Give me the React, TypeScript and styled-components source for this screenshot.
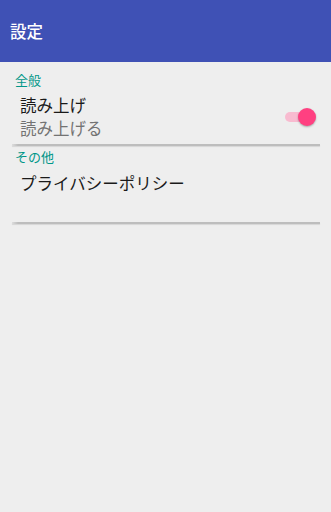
import React from "react";
import styled, { createGlobalStyle } from "styled-components";

const Global = createGlobalStyle`
  html, body { margin: 0; padding: 0; background: #eeeeee; }
  body { font-family: "Noto Sans CJK JP", "Noto Sans", sans-serif; }
`;

const Page = styled.div`
  width: 331px;
  min-height: 512px;
  background: #eeeeee;
`;

const Toolbar = styled.header`
  height: 62px;
  background: #3f51b5;
  display: flex;
  align-items: center;
  padding-left: 10px;
  box-sizing: border-box;
`;

const Title = styled.h1`
  margin: 0;
  color: #ffffff;
  font-size: 16.5px;
  font-weight: 500;
  line-height: 22px;
`;

const List = styled.div`
  padding: 0 11px 0 12px;
  display: flex;
  flex-direction: column;
`;

const Category = styled.div<{ $top: number }>`
  color: #009688;
  font-size: 13px;
  line-height: 18px;
  padding: ${(p) => p.$top}px 0 0 3px;
`;

const Item = styled.div<{ $top: number; $bottom: number }>`
  display: flex;
  align-items: center;
  padding: ${(p) => p.$top}px 4px ${(p) => p.$bottom}px 8px;
`;

const ItemText = styled.div`
  flex: 1;
  display: flex;
  flex-direction: column;
`;

const ItemTitle = styled.div`
  color: #1a1a1a;
  font-size: 16.5px;
  line-height: 23px;
`;

const ItemSummary = styled.div`
  color: #737373;
  font-size: 16.5px;
  line-height: 23px;
`;

const Divider = styled.div`
  height: 2px;
  background: linear-gradient(to right, rgba(180,180,180,0.3) 0px, #bdbdbd 6px, #bdbdbd 100%);
  box-shadow: 0 1px 1px rgba(0, 0, 0, 0.1);
`;

const Switch = styled.div`
  position: relative;
  width: 31px;
  height: 20px;
  display: flex;
  align-items: center;
`;

const Track = styled.div`
  width: 24px;
  height: 10px;
  border-radius: 5px;
  background: #f8bbd0;
`;

const Thumb = styled.div`
  position: absolute;
  right: 0;
  top: 1px;
  width: 18px;
  height: 18px;
  border-radius: 50%;
  background: #ff4081;
  box-shadow: 0 1px 2px rgba(0, 0, 0, 0.3);
`;

export default function App() {
  return (
    <Page>
      <Global />
      <Toolbar>
        <Title>設定</Title>
      </Toolbar>
      <List>
        <Category $top={9}>全般</Category>
        <Item $top={5} $bottom={4}>
          <ItemText>
            <ItemTitle>読み上げ</ItemTitle>
            <ItemSummary>読み上げる</ItemSummary>
          </ItemText>
          <Switch>
            <Track />
            <Thumb />
          </Switch>
        </Item>
        <Divider />
        <Category $top={2}>その他</Category>
        <Item $top={6} $bottom={27}>
          <ItemText>
            <ItemTitle>プライバシーポリシー</ItemTitle>
          </ItemText>
        </Item>
        <Divider />
      </List>
    </Page>
  );
}
